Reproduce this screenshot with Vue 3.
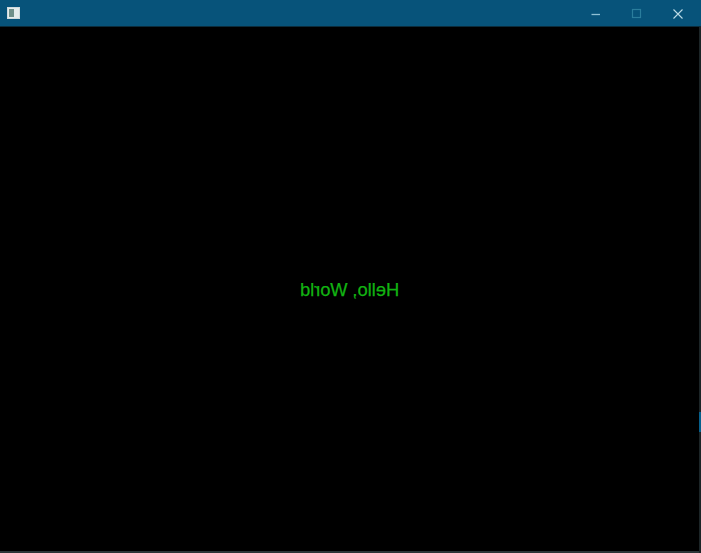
<script setup>
</script>

<template>
  <div class="window">
    <header class="titlebar">
      <svg class="app-icon" width="13" height="12" viewBox="0 0 13 12">
        <rect x="0.5" y="0.5" width="12" height="11" fill="#e4ecec" stroke="#cfdadd" />
        <rect x="2" y="2" width="5" height="8" fill="#6f908a" />
      </svg>
      <div class="controls">
        <button class="ctl">
          <svg width="12" height="12" viewBox="0 0 12 12"><path d="M1.5 6.5h8.5" stroke="#8fc0d4" stroke-width="1.3" /></svg>
        </button>
        <button class="ctl">
          <svg width="12" height="12" viewBox="0 0 12 12"><rect x="1.5" y="1.5" width="8" height="8" fill="none" stroke="#2a7d9c" stroke-width="1.2" /></svg>
        </button>
        <button class="ctl">
          <svg width="12" height="12" viewBox="0 0 12 12"><path d="M1.5 1.5l9 9M10.5 1.5l-9 9" stroke="#bcdbe6" stroke-width="1.1" /></svg>
        </button>
      </div>
    </header>
    <main class="client">
      <span class="hello">Hello, World</span>
    </main>
    <div class="edge"></div>
    <div class="side"></div>
    <div class="accent"></div>
  </div>
</template>

<style scoped>
.window {
  position: relative;
  width: 701px;
  height: 553px;
  display: flex;
  flex-direction: column;
  background: #000;
  overflow: hidden;
}
.titlebar {
  height: 26px;
  flex: none;
  display: flex;
  align-items: center;
  justify-content: space-between;
  padding-left: 7px;
  background: #07537a;
  border-bottom: 1px solid #0b2c3c;
  box-sizing: content-box;
}
.app-icon {
  display: block;
}
.controls {
  display: flex;
  padding-right: 3px;
}
.ctl {
  width: 41px;
  height: 26px;
  padding: 1px 0 0;
  border: 0;
  background: none;
  display: flex;
  align-items: center;
  justify-content: center;
}
.client {
  flex: 1;
  display: flex;
  justify-content: center;
  padding-top: 253px;
  padding-right: 1px;
  background: #000;
}
.hello {
  transform: scaleX(-1);
  height: 20px;
  font: 18.3px/20px "Liberation Sans", Arial, sans-serif;
  color: #12b312;
  -webkit-text-stroke: 0.25px #12b312;
}
.edge {
  height: 2px;
  flex: none;
  background: #2b3638;
}
.side {
  position: absolute;
  right: 0;
  top: 27px;
  width: 2px;
  bottom: 0;
  background: #1c2527;
}
.accent {
  position: absolute;
  right: 0;
  top: 412px;
  width: 2px;
  height: 20px;
  background: #07608c;
}
</style>
